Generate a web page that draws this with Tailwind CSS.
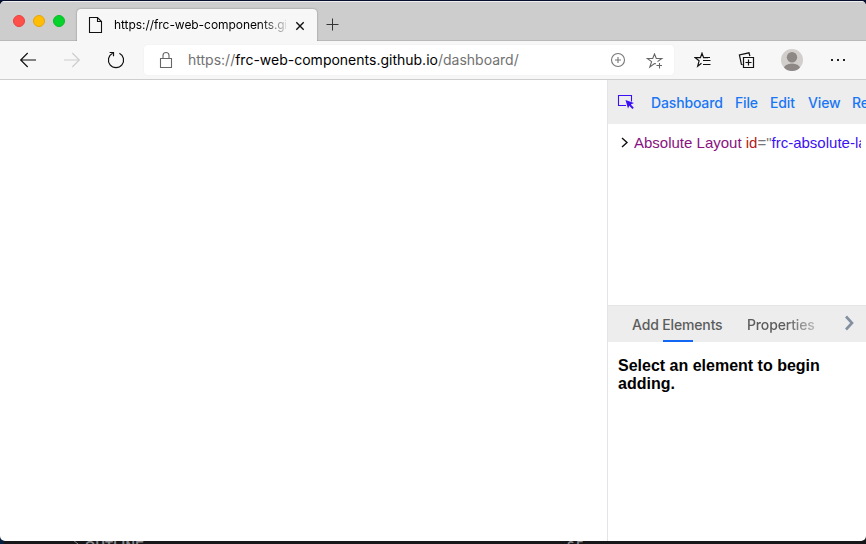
<!DOCTYPE html>
<html lang="en">
<head>
<meta charset="utf-8">
<title>Dashboard</title>
<script src="https://cdn.jsdelivr.net/npm/@tailwindcss/browser@4"></script>
</head>
<body class="relative w-[866px] h-[544px] overflow-hidden bg-[#07102f] font-['Inter',sans-serif]">
  <div class="absolute left-0 bottom-0 w-full h-[10px] bg-[#17171a] overflow-hidden text-[#85858a] text-[13px] font-bold leading-[12px] font-['Liberation_Sans',sans-serif]">
    <div class="absolute left-0 top-0 w-1 h-full bg-[#08203f]"></div>
    <svg class="absolute left-[72px] top-[6px]" width="8" height="8" fill="none" stroke="currentColor"><path d="M1 0l5 4-5 4"/></svg>
    <span class="absolute left-[85px] top-[6px] tracking-[0.3px]">OUTLINE</span>
    <span class="absolute left-[567px] top-[6px] tracking-[2px]">65</span>
  </div>
  <main class="relative mt-px w-full h-[540px] bg-white rounded-[5px] overflow-hidden flex flex-col">
    <div class="h-[40px] shrink-0 bg-[#cdcdcd] border-t border-[#eeeeee] border-b border-b-[#b9b9b9] flex relative">
      <div class="flex gap-2 pl-[13px] pt-[13px] w-[77px] shrink-0">
        <i class="size-3 rounded-full bg-[#ff4f49] border border-[#e9413e]"></i>
        <i class="size-3 rounded-full bg-[#ffbd05] border border-[#e5a50a]"></i>
        <i class="size-3 rounded-full bg-[#05d32c] border border-[#09ba27]"></i>
      </div>
      <div class="mt-[7px] h-[33px] w-[240px] shrink-0 bg-[#f7f7f7] rounded-t-[4px] shadow-[0_0_2px_rgba(0,0,0,0.4)] flex items-center relative">
        <svg class="ml-[11px] -mt-px shrink-0" width="16" height="18" fill="none" stroke="#111" stroke-width="1.1"><path d="M1.5 1.5H9.5L13.5 5.5V16.5H1.5ZM9.5 1.5V5.5H13.5"/></svg>
        <span class="ml-[10px] -mt-[2px] w-[172px] overflow-hidden whitespace-nowrap text-[12px] leading-[18px] tracking-[-0.06px] text-black [mask-image:linear-gradient(to_right,black_145px,transparent_178px)]">https://frc-web-components.github.io</span>
        <svg class="ml-[9px]" width="10" height="10" fill="none" stroke="#111" stroke-width="1.4"><path d="M1.3 1.3L8.7 8.7M8.7 1.3L1.3 8.7"/></svg>
      </div>
      <svg class="ml-[9px] mt-[16px]" width="13" height="13" fill="none" stroke="#333"><path d="M6.5 0.5V12.5M0.5 6.5H12.5"/></svg>
    </div>
    <div class="h-[39px] shrink-0 bg-[#f7f7f7] border-b border-[#cecece] flex items-center relative">
      <svg class="ml-[19px] shrink-0" width="18" height="16" fill="none" stroke="#111" stroke-width="1.2"><path d="M17 8H1.7M8.7 1L1.7 8l7 7"/></svg>
      <svg class="ml-[26px] shrink-0" width="18" height="16" fill="none" stroke="#cdcdcd" stroke-width="1.2"><path d="M1 8h15.3M9.3 1l7 7-7 7"/></svg>
      <svg class="ml-[26px] shrink-0" width="18" height="18" fill="none" stroke="#111" stroke-width="1.2"><path d="M12.4 2.2A7.6 7.6 0 1 1 5.6 2.2M2.6 1.5H6.5V5.3"/></svg>
      <div class="ml-[19px] w-[530px] h-[30px] shrink-0 bg-white rounded-[4px] shadow-[0_0_2px_rgba(0,0,0,0.06)] flex items-center">
        <svg class="ml-[15px] shrink-0" width="14" height="18" fill="none" stroke="#666" stroke-width="1.1"><path d="M1.5 7.5h11v9h-11zM4 7.5V4.5a3 3 0 0 1 6 0V7.5"/></svg>
        <span class="ml-[15px] w-[416px] whitespace-nowrap text-[14px] leading-[20px] text-[#717171] tracking-[0px]">https://<span class="text-black">frc-web-components.github.io</span>/dashboard/</span>
        <svg class="ml-[6px] shrink-0" width="16" height="16" fill="none" stroke="#777" stroke-width="1.1"><circle cx="8" cy="8" r="6.5"/><path d="M8 5v6M5 8h6"/></svg>
        <svg class="ml-[20px] mt-[2px] shrink-0" width="18" height="17" fill="none" stroke="#666" stroke-width="1.1"><path d="M10 10.8L8.5 10.5 3.8 14 5.6 8.6 1.2 5.5H6.7L8.5 1l1.8 4.5h5.5L11.5 8.6M10.5 12.5h5.5M13.5 10v5.5"/></svg>
      </div>
      <svg class="ml-[20px] mt-px shrink-0" width="18" height="17" fill="none" stroke="#111" stroke-width="1.2"><path d="M7.5 11.2L3.7 14.2 5.1 8.8 1.2 5.6H6.4L8 1.2l1.6 4.4H14M9 8.5h7.5M9 12.5h7.5M10 5.5h6"/></svg>
      <svg class="ml-[26px] shrink-0" width="18" height="18" fill="none" stroke="#111" stroke-width="1.2"><path d="M5.5 6.5h10v10h-10zM10.5 8.5v6M7.5 11.5h6M4.5 13.8L3.4 13.3 1.4 4 11 1.8l.9 3.3"/></svg>
      <svg class="ml-[24px] shrink-0" width="24" height="24"><defs><clipPath id="av"><circle cx="12" cy="12" r="11"/></clipPath></defs><circle cx="12" cy="12" r="11" fill="#d2cecb"/><g fill="#8d8885" clip-path="url(#av)"><circle cx="12" cy="9.2" r="5.2"/><ellipse cx="12" cy="21" rx="8.3" ry="5.5"/></g></svg>
      <svg class="ml-[27px] shrink-0" width="16" height="4" fill="#222"><path d="M0 1h2v2H0zM6 1h2v2H6zM12 1h2v2H12z"/></svg>
    </div>
    <div class="flex flex-1 min-h-0">
      <section class="w-[607px] shrink-0"></section>
      <aside class="w-[259px] border-l border-[#e3e4e6] flex flex-col overflow-hidden">
        <nav class="h-[44px] shrink-0 bg-[#ededed] flex items-center whitespace-nowrap text-[14px] font-medium text-[#1976f5] tracking-[-0.15px]">
          <svg class="ml-[9px] -mt-px shrink-0" width="18" height="16"><path d="M9 11.5H1.5v-10h13v6" fill="none" stroke="#3b10f5" stroke-width="1.1"/><path d="M8.5 6l8.5 3-3.2 1.5 3 3.2-1.4 1.3-3.1-3.2L11 14.5z" fill="#3b10f5"/></svg>
          <span class="ml-[16px] w-[84px] shrink-0">Dashboard</span><span class="w-[35px] shrink-0">File</span><span class="w-[38px] shrink-0">Edit</span><span class="w-[44px] shrink-0">View</span><span class="shrink-0">Recent</span>
        </nav>
        <div class="h-[181px] shrink-0 pt-[10px] pl-[13px] flex text-[15px] leading-[18px] font-['Liberation_Sans',sans-serif]">
          <svg class="mt-[3px] shrink-0" width="8" height="11" fill="none" stroke="#111" stroke-width="1.4"><path d="M1 1l5 4.5L1 10"/></svg>
          <span class="ml-[5px] w-[227px] overflow-hidden whitespace-nowrap text-[#881280]">Absolute Layout <span class="text-[#b01a1a]">id</span><span class="text-[#777]">="</span><span class="text-[#3b10f5]">frc-absolute-layout"</span></span>
        </div>
        <div class="h-[37px] shrink-0 bg-[#ededed] border-t border-[#e4e5e7] relative flex items-center text-[14px] font-medium text-[#5c5c5c] tracking-[-0.15px]">
          <span class="ml-[24px] w-[115px] shrink-0 whitespace-nowrap">Add Elements</span>
          <span class="w-[74px] shrink-0 [mask-image:linear-gradient(to_right,black_38px,transparent_84px)]">Properties</span>
          <svg class="ml-[22px] -mt-[3px]" width="13" height="16" fill="none" stroke="#8290a2" stroke-width="2.6"><path d="M3 1.5l6 6.5-6 6.5"/></svg>
          <i class="absolute left-[55px] bottom-0 h-[2px] w-[30px] bg-[#1268f5]"></i>
        </div>
        <p class="pl-[10px] pt-[15px] text-[16px] leading-[18px] font-bold text-black font-['Liberation_Sans',sans-serif]">Select an element to begin<br>adding.</p>
      </aside>
    </div>
  </main>
</body>
</html>
